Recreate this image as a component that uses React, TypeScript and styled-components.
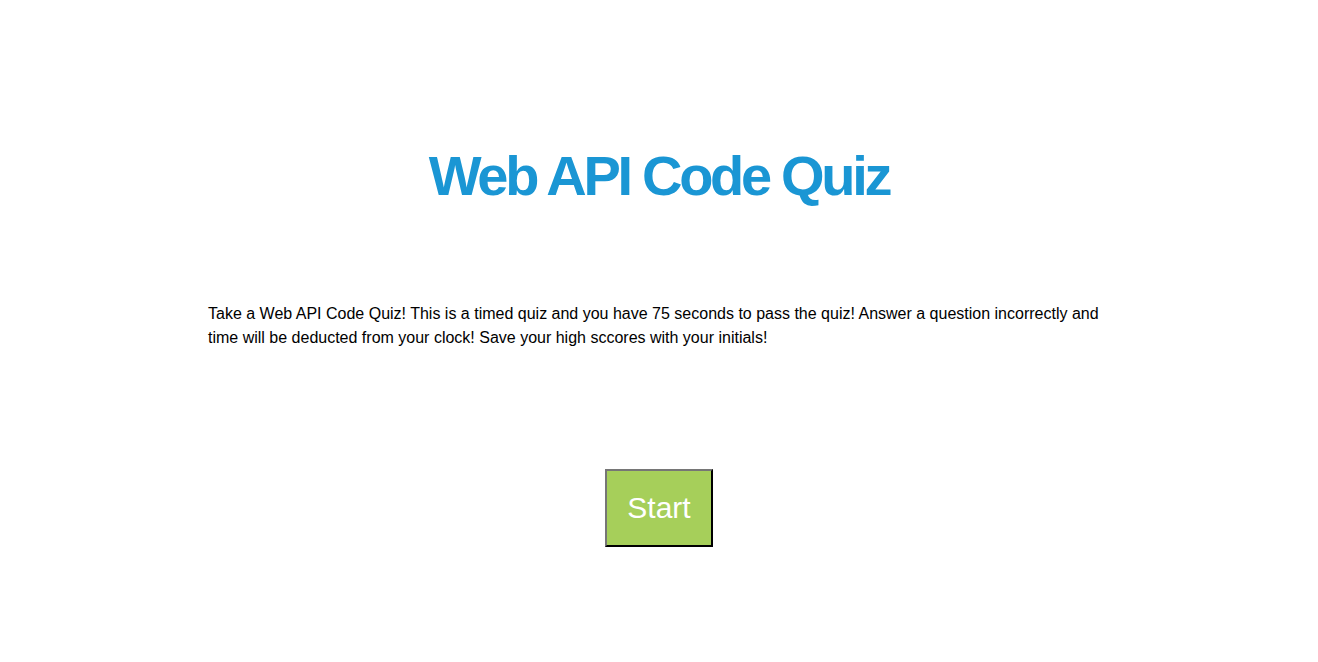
import React from "react";
import styled, { createGlobalStyle } from "styled-components";

const Global = createGlobalStyle`
  html, body { margin: 0; padding: 0; background: #ffffff; }
  body { font-family: "Liberation Sans", Arial, sans-serif; }
`;

const Page = styled.main`
  display: flex;
  flex-direction: column;
  align-items: center;
  padding-top: 144px;
`;

const Title = styled.h1`
  margin: 0;
  font-size: 56px;
  line-height: 64px;
  font-weight: 700;
  letter-spacing: -3.3px;
  color: #1a96d4;
  text-align: center;
`;

const Intro = styled.p`
  width: 902px;
  margin: 94px 0 0;
  font-size: 16px;
  line-height: 24px;
  color: #000000;
`;

const StartButton = styled.button`
  margin-top: 119px;
  padding: 20px;
  font-family: "Liberation Sans", Arial, sans-serif;
  font-size: 30px;
  line-height: 34px;
  color: #ffffff;
  background: #a6cf5a;
  border: 2px outset #767676;
  border-color: #767676 #222222 #222222 #767676;
  cursor: pointer;
`;

export default function App() {
  return (
    <>
      <Global />
      <Page>
        <Title>Web API Code Quiz</Title>
        <Intro>
          Take a Web API Code Quiz! This is a timed quiz and you have 75 seconds to pass the quiz! Answer a
          question incorrectly and time will be deducted from your clock! Save your high sccores with your
          initials!
        </Intro>
        <StartButton>Start</StartButton>
      </Page>
    </>
  );
}
